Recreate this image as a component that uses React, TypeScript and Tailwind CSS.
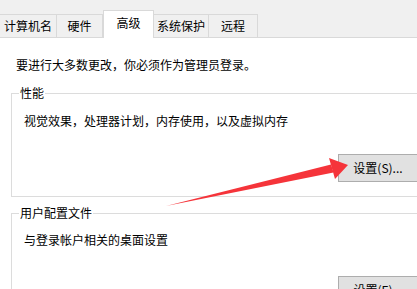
import React from "react";

const font = { fontFamily: '"Noto Sans CJK SC", "Microsoft YaHei", sans-serif' };

const tabs = [
  { label: "计算机名", w: "w-[57px]" },
  { label: "硬件", w: "w-[46px]" },
  { label: "高级", w: "w-[51px]", active: true },
  { label: "系统保护", w: "w-[55px]" },
  { label: "远程", w: "w-[49px]" },
];

function Tab({ label, w, active }: { label: string; w: string; active?: boolean }) {
  if (active) {
    return (
      <div className={`${w} -mb-px flex h-[28px] items-start justify-center border border-b-0 border-[#d9d9d9] bg-white pt-[4px]`}>
        {label}
      </div>
    );
  }
  return (
    <div className={`${w} flex h-[23px] items-center justify-center border-t border-r border-[#d9d9d9] bg-[#f0f0f0]`}>
      {label}
    </div>
  );
}

function WinButton({ label }: { label: string }) {
  return (
    <button className="flex h-[28px] w-[80px] items-center justify-center border border-[#adadad] bg-[#e1e1e1] text-[12px] leading-4 text-black">
      {label}
    </button>
  );
}

function Group({
  title,
  desc,
  button,
  className,
  descGap,
  btnGap,
}: {
  title: string;
  desc: string;
  button: string;
  className: string;
  descGap: string;
  btnGap: string;
}) {
  return (
    <fieldset className={`ml-[11px] w-[430px] border border-[#dcdcdc] pl-[12px] ${className}`}>
      <legend className="ml-[-5px] px-[1px] leading-4">{title}</legend>
      <div className={`${descGap} leading-4`}>{desc}</div>
      <div className={`${btnGap} ml-[314px]`}>
        <WinButton label={button} />
      </div>
    </fieldset>
  );
}

export default function App() {
  return (
    <div
      className="relative h-[289px] w-[417px] overflow-hidden bg-white text-[12px] leading-4 text-black"
      style={font}
    >
      <div className="box-border flex h-[38px] items-end border-b border-[#d9d9d9] bg-[#f0f0f0]">
        {tabs.map((t) => (
          <Tab key={t.label} {...t} />
        ))}
      </div>

      <div className="mt-[19px] pl-[16px]">要进行大多数更改，你必须作为管理员登录。</div>

      <Group
        title="性能"
        desc="视觉效果，处理器计划，内存使用，以及虚拟内存"
        button="设置(S)..."
        className="mt-[12px] pb-[14px]"
        descGap="mt-[12px]"
        btnGap="mt-[25px]"
      />

      <Group
        title="用户配置文件"
        desc="与登录帐户相关的桌面设置"
        button="设置(E)..."
        className="mt-[8px] pb-[14px]"
        descGap="mt-[11px]"
        btnGap="mt-[28px]"
      />

      <svg className="pointer-events-none absolute inset-0" width="417" height="289" viewBox="0 0 417 289">
        <polygon points="166,206 331,164.5 333.5,172.5" fill="#f5343a" />
        <polygon points="348,165 329,158 335,179" fill="#f5343a" />
      </svg>
    </div>
  );
}
